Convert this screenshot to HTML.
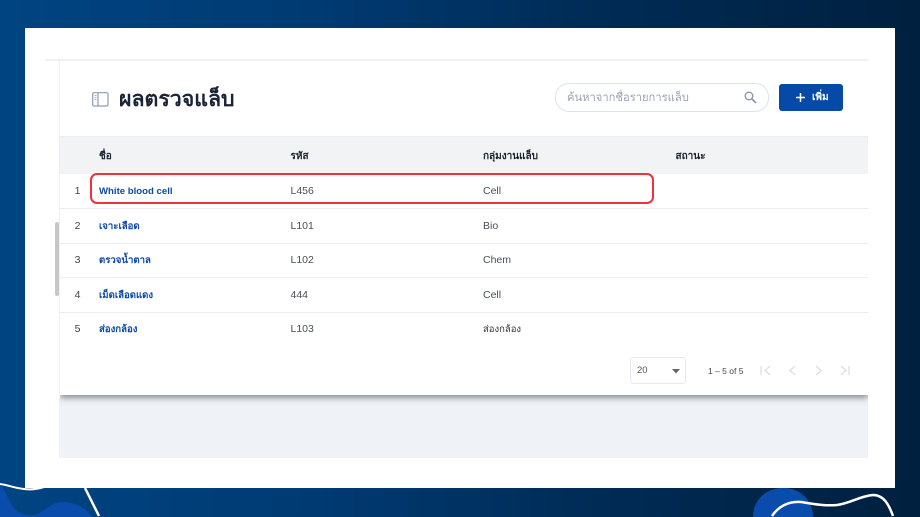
<!DOCTYPE html>
<html lang="th">
<head>
<meta charset="utf-8">
<style>
html,body{margin:0;padding:0;width:920px;height:517px;overflow:hidden}
body{position:relative;background:linear-gradient(90deg,#004482 0%,#003a72 35%,#002b55 65%,#00203f 100%);font-family:"Liberation Sans","Noto Sans CJK SC",sans-serif;color:#333c4a}
.abs{position:absolute}
.t{position:absolute;white-space:nowrap;line-height:14px;font-size:10.5px}
.h{font-weight:700;color:#1a2230;top:150px;font-size:10px}
.n{left:60px;width:35px;text-align:center;color:#444}
.l{left:99px;color:#0d4ba6;font-weight:700;font-size:9.6px;margin-top:1px}
.c{left:290.5px;color:#4a4f58}
.g{left:483px;color:#4a4f58}
.hr{position:absolute;left:60px;width:808px;height:1px;background:#eceef2}
</style>
</head>
<body>
<svg class="abs" style="left:0;top:0" width="920" height="517" viewBox="0 0 920 517">
<path d="M0 484 C5 490 8 498 11 504 C16 513 26 516 34 515 C44 513 50 502 62 502 C76 502 86 508 92 517 L0 517Z" fill="#0a4cac"/>
<path d="M753 517 C753 500 766 488 783 488 C800 488 813 500 813 517Z" fill="#0a4cac"/>
</svg>
<div class="abs" style="left:25px;top:28px;width:870px;height:460px;background:#fff"></div>
<svg class="abs" style="left:0;top:0" width="920" height="517" viewBox="0 0 920 517" fill="none">
<path d="M0 484 C8 485 14 488 24 489 C32 490 38 489 44 487" stroke="#fff" stroke-width="2"/>
<path d="M85 488 L99 516" stroke="#fff" stroke-width="2.5"/>
<path d="M772 516 C778 507 788 501 801 502 C814 504 824 506 837 505 C851 503 860 496 873 495 C884 495 889 505 893 516" stroke="#fff" stroke-width="2.5"/>
</svg>

<div class="abs" style="left:60px;top:395px;width:808px;height:63px;background:#eff2f7"></div>
<div class="abs" style="left:60px;top:61px;width:808px;height:334px;background:#fff;box-shadow:0 3px 6px rgba(0,0,0,.42);clip-path:inset(0 0 -12px 0)"></div>
<div class="abs" style="left:45px;top:59px;width:823px;height:2px;background:#f0f1f3"></div>
<div class="abs" style="left:59px;top:60px;width:1px;height:398px;background:#eef0f3"></div>
<div class="abs" style="left:55px;top:222px;width:4px;height:74px;background:#c4c6ca;border-radius:2px"></div>

<svg class="abs" style="left:92px;top:92px" width="17" height="15" viewBox="0 0 17 15" fill="none">
<rect x=".7" y=".7" width="15.3" height="13.3" rx="1.5" stroke="#8f9bb0" stroke-width="1.2"/>
<path d="M6 1v13" stroke="#8f9bb0" stroke-width="1.2"/>
<path d="M2.5 3.500h2M2.500 5.500h2M2.500 7.500h2" stroke="#a9b2c2" stroke-width="1"/>
</svg>
<div class="t" style="left:119px;top:86px;font-size:21.3px;line-height:26px;font-weight:700;color:#1a2436">ผลตรวจแล็บ</div>

<div class="abs" style="left:555px;top:83px;width:212px;height:27px;border:1px solid #dfe3ea;border-radius:14px;background:#fff"></div>
<div class="t" style="left:567px;top:91px;font-size:11.2px;color:#9aa3b2">ค้นหาจากชื่อรายการแล็บ</div>
<svg class="abs" style="left:744px;top:91px" width="13" height="13" viewBox="0 0 13 13" fill="none">
<circle cx="5" cy="5" r="3.800" stroke="#8a96a8" stroke-width="1.400"/>
<path d="M8 8l4 4" stroke="#8a96a8" stroke-width="1.600"/>
</svg>
<div class="abs" style="left:779px;top:84px;width:64px;height:27px;background:#064aa8;border-radius:3px"></div>
<svg class="abs" style="left:795px;top:92px" width="11" height="11" viewBox="0 0 11 11"><path d="M5.500 1v9M1 5.500h9" stroke="#fff" stroke-width="1.500"/></svg>
<div class="t" style="left:812px;top:91px;font-size:10px;font-weight:700;color:#fff">เพิ่ม</div>

<div class="abs" style="left:60px;top:136px;width:808px;height:38px;background:#f2f3f5;border-top:1px solid #ebedf1;box-sizing:border-box"></div>
<div class="t h" style="left:99px">ชื่อ</div>
<div class="t h" style="left:290.500px">รหัส</div>
<div class="t h" style="left:483px">กลุ่มงานแล็บ</div>
<div class="t h" style="left:675.500px">สถานะ</div>

<div class="hr" style="top:208px"></div>
<div class="hr" style="top:243px"></div>
<div class="hr" style="top:277px"></div>
<div class="hr" style="top:312px"></div>

<div class="t n" style="top:184px">1</div>
<div class="t l" style="top:184px">White blood cell</div>
<div class="t c" style="top:184px">L456</div>
<div class="t g" style="top:184px">Cell</div>

<div class="t n" style="top:219px">2</div>
<div class="t l" style="top:219px">เจาะเลือด</div>
<div class="t c" style="top:219px">L101</div>
<div class="t g" style="top:219px">Bio</div>

<div class="t n" style="top:253px">3</div>
<div class="t l" style="top:253px">ตรวจน้ำตาล</div>
<div class="t c" style="top:253px">L102</div>
<div class="t g" style="top:253px">Chem</div>

<div class="t n" style="top:288px">4</div>
<div class="t l" style="top:288px">เม็ดเลือดแดง</div>
<div class="t c" style="top:288px">444</div>
<div class="t g" style="top:288px">Cell</div>

<div class="t n" style="top:322px">5</div>
<div class="t l" style="top:322px">ส่องกล้อง</div>
<div class="t c" style="top:322px">L103</div>
<div class="t g" style="top:323px;font-size:9.500px;color:#333">ส่องกล้อง</div>

<div class="abs" style="left:90px;top:173px;width:564px;height:31px;border:2px solid #f0303c;border-radius:7px;box-sizing:border-box"></div>

<div class="abs" style="left:630px;top:357px;width:56px;height:27px;border:1px solid #e6e9ef;border-radius:3px;box-sizing:border-box"></div>
<div class="t" style="left:637px;top:364px;font-size:9.500px;color:#555">20</div>
<svg class="abs" style="left:672px;top:369px" width="8" height="5" viewBox="0 0 8 5"><path d="M0 0h8L4 4.500Z" fill="#666"/></svg>
<div class="t" style="left:708px;top:364px;font-size:8.500px;color:#444">1 – 5 of 5</div>
<svg class="abs" style="left:755px;top:362px" width="100" height="17" viewBox="0 0 100 17" fill="none" stroke="#dcdee2" stroke-width="1.300">
<path d="M6 4v9M15 4l-5 4.500 5 4.500"/>
<path d="M40 4l-5 4.500 5 4.500"/>
<path d="M61 4l5 4.500-5 4.500"/>
<path d="M86 4l5 4.500-5 4.500M94 4v9"/>
</svg>
</body>
</html>
